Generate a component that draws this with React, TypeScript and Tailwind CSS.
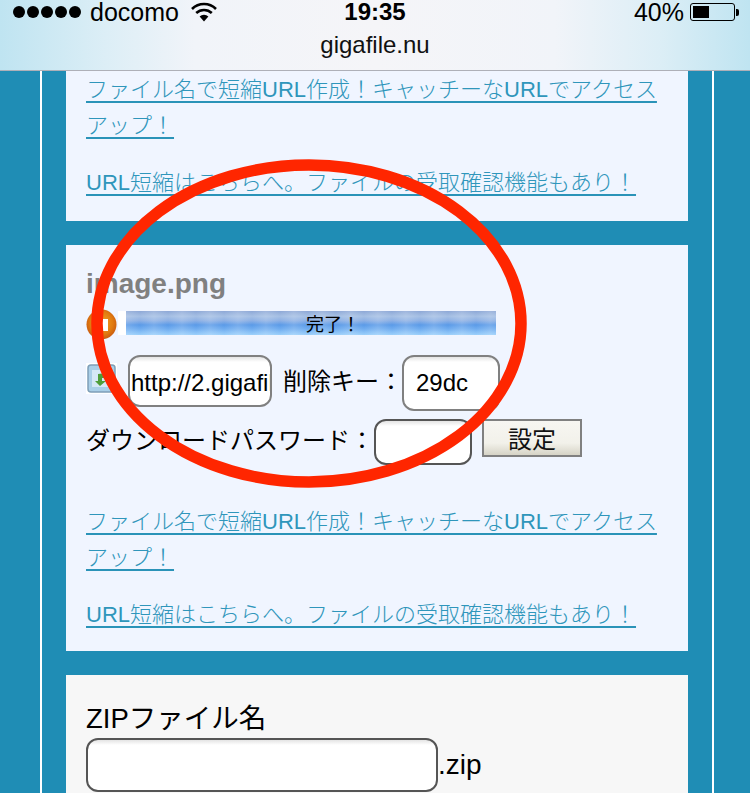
import React from "react";

const font = "font-['Liberation_Sans','Noto_Sans_CJK_JP',sans-serif]";

function Links({ top }: { top: string }) {
  return (
    <div className={top}>
      <a className="block text-[22px] leading-[36px] text-[#2f96bb] underline underline-offset-[4px] decoration-[1.5px] decoration-[#2a93b8] font-light">
        ファイル名で短縮URL作成！キャッチーなURLでアクセスアップ！
      </a>
      <a className="block mt-[21px] text-[22px] leading-[36px] text-[#2f96bb] underline underline-offset-[4px] decoration-[1.5px] decoration-[#2a93b8] font-light">
        URL短縮はこちらへ。ファイルの受取確認機能もあり！
      </a>
    </div>
  );
}

function Wifi() {
  return (
    <svg width="26" height="20" viewBox="0 0 26 20">
      <path d="M1 7 A17 17 0 0 1 25 7" fill="none" stroke="#000" strokeWidth="2.6" />
      <path d="M5.2 11 A11.5 11.5 0 0 1 20.8 11" fill="none" stroke="#000" strokeWidth="2.6" />
      <path d="M13 19.5 L8.6 14.4 A6.5 6.5 0 0 1 17.4 14.4 Z" fill="#000" />
    </svg>
  );
}

function StopIcon() {
  return (
    <svg width="32" height="32" viewBox="0 0 32 32" className="shrink-0">
      <defs>
        <radialGradient id="o" cx="50%" cy="45%" r="55%">
          <stop offset="0%" stopColor="#f5a623" />
          <stop offset="70%" stopColor="#e07a10" />
          <stop offset="100%" stopColor="#c85a10" />
        </radialGradient>
      </defs>
      <circle cx="15.5" cy="15.5" r="15" fill="url(#o)" />
      <rect x="10" y="10" width="12" height="12" fill="#fff" />
    </svg>
  );
}

function DocIcon() {
  return (
    <svg width="32" height="32" viewBox="0 0 32 32" className="shrink-0">
      <rect x="0" y="0" width="31" height="31" fill="#ffffff" />
      <rect x="2" y="2" width="27" height="27" rx="3" fill="#a9cfe8" stroke="#7f9fb8" strokeWidth="1.5" />
      <rect x="6" y="7" width="19" height="17" fill="#d5e8f6" />
      <path d="M21 13 L21 18 L16 18 L16 21 L20 21 L14 26 L9 21 L12 21 L12 14 Z" fill="#4f9e3a" transform="translate(0 -3)" />
    </svg>
  );
}

const inputBase =
  "bg-white border-2 rounded-[12px] bg-gradient-to-b from-[#e4e4e4] via-white to-white bg-[length:100%_10px] bg-no-repeat overflow-hidden whitespace-nowrap text-[24px] text-black shrink-0";

export default function App() {
  return (
    <div className={`relative w-[750px] h-[793px] overflow-hidden flex flex-col bg-[#1f8db5] text-black ${font}`}>
      <header className="h-[71px] shrink-0 relative border-b border-[#aeb0b8] bg-[linear-gradient(90deg,#bfe4f1_0%,#dceef6_14%,#f1f4f9_26%,#f5f5f8_50%,#f1f4f9_74%,#dceef6_88%,#bfe4f1_100%)]">
        <div className="h-[24px] flex items-center justify-between pl-[13px] pr-[11px]">
          <div className="flex items-center">
            <div className="flex gap-[2px]">
              {[0, 1, 2, 3, 4].map((i) => (
                <span key={i} className="w-[12px] h-[12px] rounded-full bg-black" />
              ))}
            </div>
            <span className="ml-[9px] text-[25px] leading-[24px]">docomo</span>
            <span className="ml-[12px] flex"><Wifi /></span>
          </div>
          <div className="flex items-center">
            <span className="text-[25px] leading-[24px]">40%</span>
            <div className="ml-[6px] flex items-center">
              <div className="w-[45px] h-[18px] border border-black rounded-[3px] p-[2px]">
                <div className="w-[16px] h-full bg-black" />
              </div>
              <div className="w-[3px] h-[7px] bg-black rounded-r-[2px] ml-[1px]" />
            </div>
          </div>
        </div>
        <div className="absolute left-0 right-0 top-0 text-center text-[24px] leading-[24px] font-bold">19:35</div>
        <div className="mt-[6px] text-center text-[24px] leading-[30px] text-[#111]">gigafile.nu</div>
      </header>

      <main className="flex-1 min-h-0 ml-[40px] mr-[36px] border-x-2 border-white px-[24px] overflow-hidden">
        <section className="h-[150px] bg-[#f0f5ff] px-[20px]">
          <Links top="pt-[1px]" />
        </section>

        <section className="mt-[24px] h-[406px] bg-[#f0f5ff] px-[20px]">
          <h2 className="pt-[23px] text-[28px] leading-[32px] font-bold text-[#808080]">image.png</h2>
          <div className="mt-[9px] flex items-start h-[32px]">
            <StopIcon />
            <div className="w-[8px] h-[24px] mt-[2px] bg-white" />
            <div className="relative w-[370px] h-[24px] mt-[2px] pl-[44px] bg-[linear-gradient(180deg,#8da8d6_0%,#a5bfe4_22%,#8db0e4_40%,#5a9ae8_58%,#70adf0_75%,#9bd0fb_100%)] text-center text-[18px] leading-[28px]">
              <div className="absolute inset-0 bg-[repeating-linear-gradient(90deg,rgba(255,255,255,0.16)_0px,rgba(255,255,255,0)_14px,rgba(255,255,255,0.16)_28px)]" />
              <span className="relative">完了！</span>
            </div>
          </div>
          <div className="mt-[14px] flex items-start">
            <span className="mt-[8px] flex"><DocIcon /></span>
            <div className={`${inputBase} ml-[10px] w-[144px] h-[52px] border-[#808080] pl-[1px] leading-[51px]`}>http://2.gigafile.nu</div>
            <span className="ml-[11px] mt-[9px] text-[24px] leading-[36px]">削除キー：</span>
            <div className={`${inputBase} -ml-[1px] w-[98px] h-[56px] border-[#808080] pl-[12px] leading-[52px]`}>29dc</div>
          </div>
          <div className="mt-[8px] flex items-start">
            <span className="mt-[4px] text-[24px] leading-[36px]">ダウンロードパスワード：</span>
            <div className={`${inputBase} w-[98px] h-[46px] border-[#555555]`} />
            <button className="ml-[10px] w-[100px] h-[38px] border-2 border-[#808080] bg-[linear-gradient(180deg,#f7f6f2_0%,#f2f1ea_65%,#d6d3c6_100%)] text-[24px] leading-[38px] text-[#111]">設定</button>
          </div>
          <Links top="mt-[39px]" />
        </section>

        <section className="mt-[24px] h-[200px] bg-[#f7f7f7] px-[20px]">
          <div className="pt-[26px] text-[27.5px] leading-[36px]">ZIPファイル名</div>
          <div className="mt-[1px] flex items-center">
            <div className={`${inputBase} w-[352px] h-[54px] border-[#555555]`} />
            <span className="text-[28px] leading-none">.zip</span>
          </div>
        </section>
      </main>

      <svg width="750" height="793" viewBox="0 0 750 793" className="absolute inset-0 pointer-events-none">
        <ellipse cx="309" cy="323.5" rx="212" ry="158.5" fill="none" stroke="#ff2600" strokeWidth="11.5" />
      </svg>
    </div>
  );
}
